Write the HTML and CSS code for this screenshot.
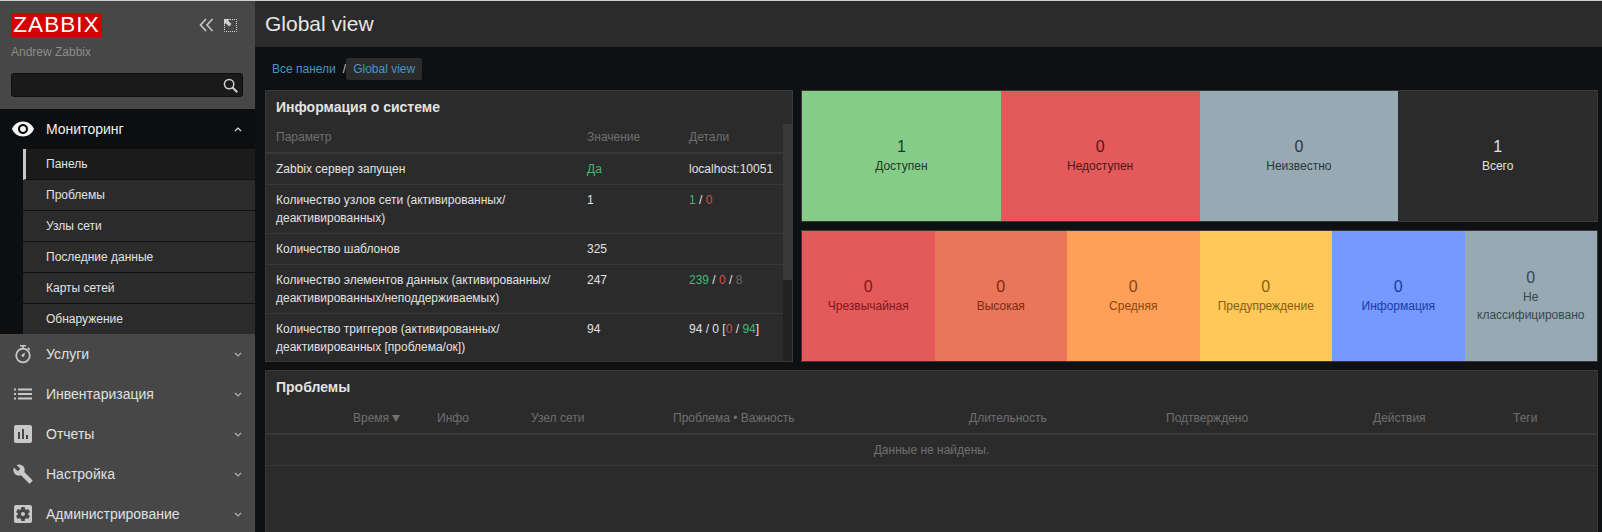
FILE: index.html
```html
<!DOCTYPE html>
<html lang="ru">
<head>
    <meta charset="UTF-8">
    <meta name="viewport" content="width=device-width, initial-scale=1.0">
    <title>Global view</title>
    <link rel="stylesheet" href="styles.css">
</head>
<body>
    <aside class="sidebar">
        <div class="brand">
            <div class="brand-top">
                <div class="logo">ZABBIX</div>
                <div class="brand-tools">
                    <svg class="tool-icon" viewBox="0 0 15 14"><path d="M7 1 1.500 7 7 13M13.500 1 8 7l5.500 6" fill="none" stroke="#c8c8c8" stroke-width="1.600"/></svg>
                    <svg class="tool-icon expand" viewBox="0 0 13 13"><path d="M6 .5h6.500v12H.5V6" fill="none" stroke="#d8d8d8" stroke-dasharray="1 1"/><path d="M0 0h6L4.200 1.800 7.500 5.100 5.100 7.500 1.800 4.200 0 6z" fill="#d0d0d0"/></svg>
                </div>
            </div>
            <div class="brand-user">Andrew Zabbix</div>
            <div class="search">
                <svg class="search-icon" viewBox="0 0 16 16"><circle cx="6.500" cy="6.500" r="5" fill="none" stroke="#d0d0d0" stroke-width="1.600"/><path d="m10.200 10.200 5 5" stroke="#d0d0d0" stroke-width="2.200"/></svg>
            </div>
        </div>
        <nav class="nav">
            <div class="nav-group open">
                <div class="nav-item">
                    <svg class="nav-icon" viewBox="0 0 24 24"><path d="M12 4.500C7 4.500 2.730 7.610 1 12c1.730 4.390 6 7.500 11 7.500s9.270-3.110 11-7.500c-1.730-4.390-6-7.500-11-7.500zM12 17c-2.760 0-5-2.240-5-5s2.240-5 5-5 5 2.240 5 5-2.240 5-5 5zm0-8c-1.660 0-3 1.340-3 3s1.340 3 3 3 3-1.340 3-3-1.340-3-3-3z"/></svg>
                    <span class="nav-label">Мониторинг</span>
                    <svg class="chevron" viewBox="0 0 8 5"><path d="M1 4 4 1l3 3" fill="none" stroke="#e0e0e0" stroke-width="1.200"/></svg>
                </div>
                <ul class="subnav">
                    <li class="active">Панель</li>
                    <li>Проблемы</li>
                    <li>Узлы сети</li>
                    <li>Последние данные</li>
                    <li>Карты сетей</li>
                    <li>Обнаружение</li>
                </ul>
            </div>
            <div class="nav-item">
                <svg class="nav-icon" viewBox="0 0 24 24"><circle cx="12" cy="13.500" r="6.800" fill="none" stroke="#c8c8c8" stroke-width="1.800"/><path d="M9 3h6v1.600h-6zM11.200 4.500h1.600v2.500h-1.600zM17.400 5.300l1.900 1.900-1.100 1.100-1.900-1.900z"/><path d="m11 12.500 3.600-2.200-2.100 3.700z"/><circle cx="12" cy="13.500" r="1.400"/></svg>
                <span class="nav-label">Услуги</span>
                <svg class="chevron" viewBox="0 0 8 5"><path d="m1 1 3 3 3-3" fill="none" stroke="#b0b0b0" stroke-width="1.200"/></svg>
            </div>
            <div class="nav-item">
                <svg class="nav-icon" viewBox="0 0 24 24"><path d="M3 6.500h2v2H3zM7 6.500h14v2H7zM3 11h2v2H3zM7 11h14v2H7zM3 15.500h2v2H3zM7 15.500h14v2H7z"/></svg>
                <span class="nav-label">Инвентаризация</span>
                <svg class="chevron" viewBox="0 0 8 5"><path d="m1 1 3 3 3-3" fill="none" stroke="#b0b0b0" stroke-width="1.200"/></svg>
            </div>
            <div class="nav-item">
                <svg class="nav-icon" viewBox="0 0 24 24"><path d="M19 3H5c-1.100 0-2 .9-2 2v14c0 1.100.9 2 2 2h14c1.100 0 2-.9 2-2V5c0-1.100-.9-2-2-2zM9 17H7v-7h2v7zm4 0h-2V7h2v10zm4 0h-2v-4h2v4z"/></svg>
                <span class="nav-label">Отчеты</span>
                <svg class="chevron" viewBox="0 0 8 5"><path d="m1 1 3 3 3-3" fill="none" stroke="#b0b0b0" stroke-width="1.200"/></svg>
            </div>
            <div class="nav-item">
                <svg class="nav-icon" viewBox="0 0 24 24"><path transform="translate(1.500 1.500) scale(.87)" d="M22.700 19l-9.100-9.100c.9-2.300.4-5-1.500-6.900-2-2-5-2.400-7.400-1.300L9 6 6 9 1.600 4.700C.4 7.100.9 10.100 2.900 12.100c1.900 1.900 4.600 2.400 6.900 1.500l9.100 9.100c.4.4 1 .4 1.400 0l2.300-2.300c.5-.4.5-1.100.1-1.400z"/></svg>
                <span class="nav-label">Настройка</span>
                <svg class="chevron" viewBox="0 0 8 5"><path d="m1 1 3 3 3-3" fill="none" stroke="#b0b0b0" stroke-width="1.200"/></svg>
            </div>
            <div class="nav-item">
                <svg class="nav-icon" viewBox="0 0 24 24"><path fill-rule="evenodd" d="M12 10c-1.100 0-2 .9-2 2s.9 2 2 2 2-.9 2-2-.9-2-2-2zm7-7H5c-1.110 0-2 .9-2 2v14c0 1.100.89 2 2 2h14c1.110 0 2-.9 2-2V5c0-1.100-.89-2-2-2zm-1.750 9c0 .23-.02.46-.05.68l1.480 1.160c.13.11.17.3.08.45l-1.400 2.420c-.09.15-.27.21-.43.15l-1.740-.7c-.36.28-.76.51-1.180.69l-.26 1.850c-.03.17-.18.3-.35.3h-2.800c-.17 0-.32-.13-.35-.3l-.26-1.850c-.43-.18-.82-.41-1.180-.69l-1.740.7c-.16.06-.34 0-.43-.15l-1.400-2.420c-.09-.15-.05-.34.08-.45l1.480-1.160c-.03-.22-.05-.45-.05-.68 0-.23.02-.46.05-.68l-1.480-1.160c-.13-.11-.17-.3-.08-.45l1.400-2.420c.09-.15.27-.21.43-.15l1.740.7c.36-.28.76-.51 1.180-.69l.26-1.850c.03-.17.18-.3.35-.3h2.800c.17 0 .32.13.35.3l.26 1.850c.43.18.82.41 1.180.69l1.740-.7c.16-.06.34 0 .43.15l1.400 2.420c.09.15.05.34-.08.45l-1.480 1.160c.03.22.05.45.05.68z"/></svg>
                <span class="nav-label">Администрирование</span>
                <svg class="chevron" viewBox="0 0 8 5"><path d="m1 1 3 3 3-3" fill="none" stroke="#b0b0b0" stroke-width="1.200"/></svg>
            </div>
        </nav>
    </aside>

    <main class="main">
        <header class="page-title">
            <h1>Global view</h1>
        </header>
        <div class="breadcrumbs">
            <a class="crumb">Все панели</a>
            <span class="crumb-sep">/</span>
            <a class="crumb current">Global view</a>
        </div>

        <div class="dashboard">
            <section class="widget info-widget">
                <h2>Информация о системе</h2>
                <div class="info-body">
                    <table class="info-table">
                        <colgroup>
                            <col class="col-param">
                            <col class="col-value">
                            <col>
                        </colgroup>
                        <thead>
                            <tr><th>Параметр</th><th>Значение</th><th>Детали</th></tr>
                        </thead>
                        <tbody>
                            <tr>
                                <td>Zabbix сервер запущен</td>
                                <td class="green">Да</td>
                                <td>localhost:10051</td>
                            </tr>
                            <tr>
                                <td>Количество узлов сети (активированных/<br>деактивированных)</td>
                                <td>1</td>
                                <td><span class="green">1</span> / <span class="red">0</span></td>
                            </tr>
                            <tr>
                                <td>Количество шаблонов</td>
                                <td>325</td>
                                <td></td>
                            </tr>
                            <tr>
                                <td>Количество элементов данных (активированных/<br>деактивированных/неподдерживаемых)</td>
                                <td>247</td>
                                <td><span class="green">239</span> / <span class="red">0</span> / <span class="grey">8</span></td>
                            </tr>
                            <tr>
                                <td>Количество триггеров (активированных/<br>деактивированных [проблема/ок])</td>
                                <td>94</td>
                                <td>94 / 0 [<span class="red">0</span> / <span class="green">94</span>]</td>
                            </tr>
                        </tbody>
                    </table>
                    <div class="scroll-track"><div class="scroll-thumb"></div></div>
                </div>
            </section>

            <section class="widget tiles tiles-4">
                <div class="tile t-green"><b>1</b><span>Доступен</span></div>
                <div class="tile t-red"><b>0</b><span>Недоступен</span></div>
                <div class="tile t-grey"><b>0</b><span>Неизвестно</span></div>
                <div class="tile t-total"><b>1</b><span>Всего</span></div>
            </section>

            <section class="widget tiles tiles-6">
                <div class="tile s-disaster"><b>0</b><span>Чрезвычайная</span></div>
                <div class="tile s-high"><b>0</b><span>Высокая</span></div>
                <div class="tile s-average"><b>0</b><span>Средняя</span></div>
                <div class="tile s-warning"><b>0</b><span>Предупреждение</span></div>
                <div class="tile s-info"><b>0</b><span>Информация</span></div>
                <div class="tile s-none"><b>0</b><span>Не классифицировано</span></div>
            </section>

            <section class="widget problems-widget">
                <h2>Проблемы</h2>
                <table class="problems-table">
                    <colgroup>
                        <col class="p-time">
                        <col class="p-info">
                        <col class="p-host">
                        <col class="p-problem">
                        <col class="p-duration">
                        <col class="p-ack">
                        <col class="p-actions">
                        <col>
                    </colgroup>
                    <thead>
                        <tr>
                            <th class="time-head">Время <i class="sort-arrow"></i></th>
                            <th>Инфо</th>
                            <th>Узел сети</th>
                            <th>Проблема • Важность</th>
                            <th>Длительность</th>
                            <th>Подтверждено</th>
                            <th>Действия</th>
                            <th>Теги</th>
                        </tr>
                    </thead>
                    <tbody>
                        <tr><td class="no-data" colspan="8">Данные не найдены.</td></tr>
                    </tbody>
                </table>
            </section>
        </div>
    </main>
</body>
</html>
```

FILE: styles.css
```css
* {
    box-sizing: border-box;
}

html, body {
    height: 100%;
}

body {
    margin: 0;
    display: flex;
    overflow: hidden;
    border-top: 1px solid #cfcfcf;
    background-color: #0e1012;
    color: #e2e2e2;
    font-family: "Liberation Sans", Arial, sans-serif;
    font-size: 12px;
    line-height: 18px;
}

/* sidebar */
.sidebar {
    flex: 0 0 255px;
    background-color: #474747;
}

.brand {
    height: 108px;
    padding: 12px 12px 0 11px;
}

.brand-top {
    display: flex;
    justify-content: space-between;
    align-items: center;
}

.logo {
    width: 91px;
    height: 24px;
    background-color: #d40000;
    color: #fff;
    font-size: 22.500px;
    line-height: 24px;
    letter-spacing: 1.100px;
    text-align: center;
}

.brand-tools {
    display: flex;
    gap: 10px;
    align-items: center;
    margin-right: 6px;
}

.tool-icon {
    display: block;
    width: 15px;
    height: 14px;
}

.tool-icon.expand {
    width: 13px;
    height: 13px;
}

.brand-user {
    margin-top: 6px;
    color: #8c8c8c;
}

.search {
    display: flex;
    justify-content: flex-end;
    align-items: center;
    height: 24px;
    margin-top: 12px;
    padding-right: 4px;
    background-color: #1a1a1a;
    border: 1px solid #0c0e10;
    border-radius: 3px;
}

.search-icon {
    width: 15px;
    height: 15px;
}

.nav-item {
    display: flex;
    align-items: center;
    height: 40px;
    padding: 0 13px 0 11px;
    font-size: 14px;
    color: #e0e0e0;
}

.nav-icon {
    flex: 0 0 24px;
    width: 24px;
    height: 24px;
    fill: #c8c8c8;
}

.nav-label {
    flex: 1;
    margin-left: 11px;
}

.chevron {
    width: 8px;
    height: 5px;
}

.nav-group.open {
    background-color: #0c0e10;
}

.nav-group.open .nav-item {
    color: #f0f0f0;
}

.nav-group.open .nav-icon {
    fill: #f5f5f5;
}

.subnav {
    list-style: none;
    margin: 0 0 0 23px;
    padding: 0;
}

.subnav li {
    height: 31px;
    padding: 6px 0 0 23px;
    background-color: #2b2b2b;
    border-bottom: 1px solid #111;
}

.subnav li:last-child {
    height: 30px;
    border-bottom: 0;
}

.subnav li.active {
    padding-left: 20px;
    background-color: #1b1b1b;
    border-left: 3px solid #c8c8c8;
    height: 31px;
}

/* main area */
.main {
    flex: 1;
    min-width: 0;
}

.page-title {
    height: 46px;
    padding-left: 10px;
    background-color: #2b2b2b;
}

.page-title h1 {
    margin: 0;
    font-size: 21px;
    font-weight: 400;
    line-height: 46px;
    color: #e6e6e6;
}

.breadcrumbs {
    display: flex;
    align-items: center;
    height: 23px;
    margin-top: 10px;
    padding-left: 17px;
}

.crumb {
    color: #4796c4;
}

.crumb-sep {
    margin: 0 0 0 7px;
    color: #c8c8c8;
}

.crumb.current {
    padding: 0 7px;
    line-height: 22px;
    background-color: #2b2b2b;
    border-radius: 2px;
}

.dashboard {
    display: grid;
    grid-template-columns: 528px 797px;
    grid-template-rows: 132px 132px auto;
    gap: 8px;
    margin-top: 10px;
    padding-left: 10px;
}

.widget {
    background-color: #2b2b2b;
    border: 1px solid #383838;
    overflow: hidden;
}

.widget h2 {
    margin: 0;
    padding: 1px 0 0 10px;
    font-size: 14px;
    line-height: 30px;
    font-weight: 700;
    color: #e2e2e2;
}

.info-widget {
    grid-row: 1 / 3;
}

.info-body {
    display: flex;
    align-items: flex-start;
}

table {
    border-collapse: collapse;
    table-layout: fixed;
}

th {
    padding: 6px 10px;
    font-weight: 400;
    text-align: left;
    color: #6f6f6f;
    border-bottom: 2px solid #383838;
}

td {
    padding: 6px 10px;
    vertical-align: top;
    border-bottom: 1px solid #383838;
}

.info-table {
    width: 517px;
}

.info-table tr:last-child td {
    border-bottom: 0;
}

.col-param {
    width: 311px;
}

.col-value {
    width: 102px;
}

.scroll-track {
    width: 9px;
    height: 238px;
    margin: 2px 0 0 0;
    background-color: #222;
}

.scroll-thumb {
    height: 156px;
    background-color: #383838;
}

.green {
    color: #3dbb75;
}

.red {
    color: #d64e4e;
}

.grey {
    color: #666;
}

/* status tiles */
.tiles {
    display: grid;
}

.tiles-4 {
    grid-template-columns: repeat(4, 1fr);
}

.tiles-6 {
    grid-template-columns: repeat(6, 1fr);
}

.tile {
    display: flex;
    flex-direction: column;
    justify-content: center;
    align-items: center;
    padding: 0 10px;
    text-align: center;
}

.tile b {
    font-size: 16px;
    font-weight: 400;
    line-height: 20px;
}

.t-green { background-color: #86cc89; color: #1c3a22; }
.t-red { background-color: #e45959; color: #4c1a1c; }
.t-grey { background-color: #97aab3; color: #2b353c; }
.t-total { background-color: #2b2b2b; color: #e2e2e2; }
.s-disaster { background-color: #e45959; color: #7a1a1a; }
.s-high { background-color: #e97659; color: #7a2a16; }
.s-average { background-color: #ffa059; color: #8a4510; }
.s-warning { background-color: #ffc859; color: #84600f; }
.s-info { background-color: #7499ff; color: #1b3ba8; }
.s-none { background-color: #97aab3; color: #39464d; }

/* problems */
.problems-widget {
    grid-column: 1 / 3;
    height: 170px;
}

.problems-widget h2 {
    padding-top: 1px;
    line-height: 31px;
}

.problems-table {
    width: 100%;
}

.p-time { width: 161px; }
.p-info { width: 94px; }
.p-host { width: 142px; }
.p-problem { width: 296px; }
.p-duration { width: 197px; }
.p-ack { width: 207px; }
.p-actions { width: 140px; }

.time-head {
    padding-left: 87px;
}

.sort-arrow {
    display: inline-block;
    width: 0;
    height: 0;
    border-left: 4px solid transparent;
    border-right: 4px solid transparent;
    border-top: 7px solid #6f6f6f;
}

.no-data {
    text-align: center;
    color: #6f6f6f;
}
```
